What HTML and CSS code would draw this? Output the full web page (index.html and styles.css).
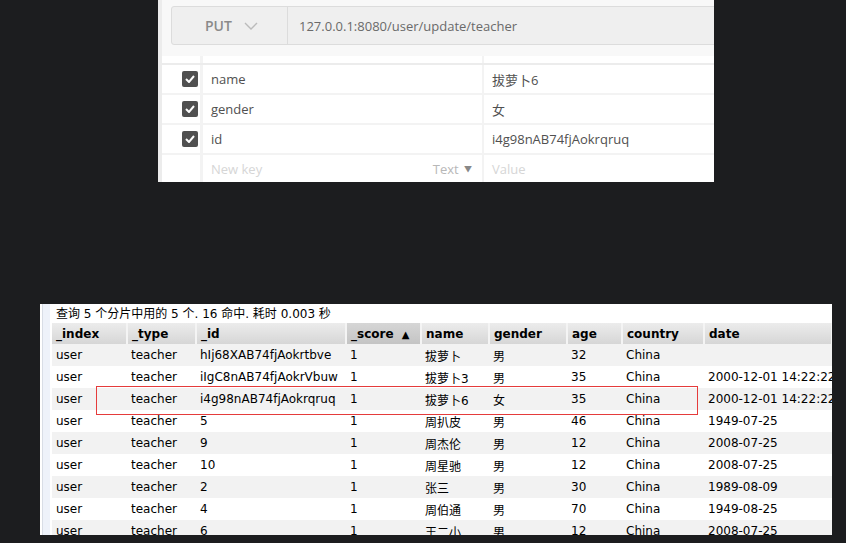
FILE: index.html
```html
<!DOCTYPE html>
<html>
<head>
<meta charset="utf-8">
<link rel="stylesheet" href="styles.css">
</head>
<body>
<div class="canvas">
  <section class="postman">
    <div class="bar-wrap">
      <div class="urlbar">
        <div class="method">PUT
          <svg class="chev" width="14" height="8" viewBox="0 0 14 8"><path d="M1 1 L7 7 L13 1" fill="none" stroke="#bbb" stroke-width="1.4"/></svg>
        </div>
        <div class="url">127.0.0.1:8080/user/update/teacher</div>
      </div>
    </div>
    <div class="kv-head">
      <div class="c-check"></div><div class="c-key"></div><div class="c-val"></div>
    </div>
    <div class="kv-row">
      <div class="c-check"><span class="cb"><svg width="10" height="8" viewBox="0 0 10 8"><path d="M1 4 L4 7 L9 1" fill="none" stroke="#fff" stroke-width="2"/></svg></span></div>
      <div class="c-key">name</div><div class="c-val">拔萝卜6</div>
    </div>
    <div class="kv-row">
      <div class="c-check"><span class="cb"><svg width="10" height="8" viewBox="0 0 10 8"><path d="M1 4 L4 7 L9 1" fill="none" stroke="#fff" stroke-width="2"/></svg></span></div>
      <div class="c-key">gender</div><div class="c-val">女</div>
    </div>
    <div class="kv-row">
      <div class="c-check"><span class="cb"><svg width="10" height="8" viewBox="0 0 10 8"><path d="M1 4 L4 7 L9 1" fill="none" stroke="#fff" stroke-width="2"/></svg></span></div>
      <div class="c-key">id</div><div class="c-val">i4g98nAB74fjAokrqruq</div>
    </div>
    <div class="kv-row ph">
      <div class="c-check"></div>
      <div class="c-key"><span>New key</span><span class="type">Text <span class="tri">▼</span></span></div>
      <div class="c-val">Value</div>
    </div>
  </section>

  <section class="es">
    <div class="side"></div>
    <div class="es-main">
      <div class="info">查询 5 个分片中用的 5 个. 16 命中. 耗时 0.003 秒</div>
      <table class="grid">
        <colgroup>
          <col style="width:75px"><col style="width:69px"><col style="width:150px"><col style="width:75px"><col style="width:68px"><col style="width:78px"><col style="width:55px"><col style="width:82px"><col style="width:128px">
        </colgroup>
        <thead>
          <tr><th>_index</th><th>_type</th><th>_id</th><th class="sorted">_score <span class="arrow">▲</span></th><th>name</th><th>gender</th><th>age</th><th>country</th><th>date</th></tr>
        </thead>
        <tbody>
          <tr><td>user</td><td>teacher</td><td>hIj68XAB74fjAokrtbve</td><td>1</td><td>拔萝卜</td><td>男</td><td>32</td><td>China</td><td></td></tr>
          <tr><td>user</td><td>teacher</td><td>iIgC8nAB74fjAokrVbuw</td><td>1</td><td>拔萝卜3</td><td>男</td><td>35</td><td>China</td><td>2000-12-01 14:22:22</td></tr>
          <tr><td>user</td><td>teacher</td><td>i4g98nAB74fjAokrqruq</td><td>1</td><td>拔萝卜6</td><td>女</td><td>35</td><td>China</td><td>2000-12-01 14:22:22</td></tr>
          <tr><td>user</td><td>teacher</td><td>5</td><td>1</td><td>周扒皮</td><td>男</td><td>46</td><td>China</td><td>1949-07-25</td></tr>
          <tr><td>user</td><td>teacher</td><td>9</td><td>1</td><td>周杰伦</td><td>男</td><td>12</td><td>China</td><td>2008-07-25</td></tr>
          <tr><td>user</td><td>teacher</td><td>10</td><td>1</td><td>周星驰</td><td>男</td><td>12</td><td>China</td><td>2008-07-25</td></tr>
          <tr><td>user</td><td>teacher</td><td>2</td><td>1</td><td>张三</td><td>男</td><td>30</td><td>China</td><td>1989-08-09</td></tr>
          <tr><td>user</td><td>teacher</td><td>4</td><td>1</td><td>周伯通</td><td>男</td><td>70</td><td>China</td><td>1949-08-25</td></tr>
          <tr><td>user</td><td>teacher</td><td>6</td><td>1</td><td>王二小</td><td>男</td><td>12</td><td>China</td><td>2008-07-25</td></tr>
        </tbody>
      </table>
      <div class="highlight"></div>
    </div>
  </section>
</div>
</body>
</html>
```

FILE: styles.css
```css
html, body {
  margin: 0;
  padding: 0;
  background: #1c1d1f;
}
.canvas {
  width: 846px;
  height: 543px;
  overflow: hidden;
  display: flex;
  flex-direction: column;
  align-items: flex-start;
}

/* ---------- top panel (request editor) ---------- */
.postman {
  margin-left: 158px;
  width: 552px;
  height: 182px;
  flex: none;
  background: #fff;
  border-left: 4px solid #ececec;
  overflow: hidden;
  font-family: "Open Sans", "Noto Sans CJK SC", sans-serif;
  font-size: 13px;
  color: #505050;
}
.bar-wrap {
  background: #f8f8f8;
  padding: 6px 0 11px 9px;
}
.urlbar {
  display: flex;
  width: 620px;
  height: 37px;
  background: #efefef;
  border: 1px solid #dcdcdc;
  border-radius: 3px;
}
.method {
  width: 82px;
  padding-left: 33px;
  border-right: 1px solid #dcdcdc;
  display: flex;
  align-items: center;
  gap: 12px;
  font-size: 14px;
  font-weight: 600;
  color: #8a8a8a;
}
.chev { margin-top: 1px; }
.url {
  display: flex;
  align-items: center;
  padding-left: 11px;
  color: #6a6a6a;
  font-size: 13px;
}
.kv-head {
  display: flex;
  height: 7px;
  border-bottom: 2px solid #ececec;
}
.kv-row {
  display: flex;
  height: 28px;
  border-bottom: 2px solid #f3f3f3;
}
.c-check {
  flex: none;
  border-right: 3px solid #f3f3f3;
  display: flex;
  align-items: center;
  justify-content: flex-end;
  padding-right: 2px;
  box-sizing: border-box;
  width: 41px;
}
.c-key {
  width: 281px;
  flex: none;
  box-sizing: border-box;
  border-right: 2px solid #f3f3f3;
  padding-left: 8px;
  padding-right: 10px;
  display: flex;
  align-items: center;
  justify-content: space-between;
}
.c-val {
  flex: 1;
  padding-left: 8px;
  display: flex;
  align-items: center;
}
.cb {
  width: 16px;
  height: 16px;
  border-radius: 2px;
  background: #505050;
  display: flex;
  align-items: center;
  justify-content: center;
}
.ph .c-key, .ph .c-val { color: #d6d6d6; }
.ph .type { color: #b8b8b8; }
.tri { font-size: 8px; vertical-align: 2px; margin-left: 2px; color: #888; }

/* ---------- bottom panel (elasticsearch head) ---------- */
.es {
  margin-top: 122px;
  margin-left: 40px;
  width: 792px;
  height: 231px;
  flex: none;
  background: #fff;
  display: flex;
  overflow: hidden;
  font-family: "DejaVu Sans", "Noto Sans CJK SC", sans-serif;
  font-size: 12px;
  color: #000;
}
.side {
  width: 7px;
  flex: none;
  margin: 0 2px 0 2px;
  border-left: 1px solid #d8dde6;
  background: #eef2fa;
}
.es-main {
  position: relative;
  flex: 1;
}
.info {
  height: 19px;
  line-height: 21px;
  padding-left: 4px;
  font-size: 12px;
  white-space: nowrap;
}
.grid {
  table-layout: fixed;
  border-collapse: collapse;
  width: 780px;
}
.grid th {
  height: 21px;
  padding: 0 0 0 4px;
  text-align: left;
  font-weight: bold;
  font-size: 12px;
  background: linear-gradient(#ececec, #d6d6d6);
  border-right: 2px solid #f4f4f4;
  white-space: nowrap;
  overflow: hidden;
}
.grid th.sorted {
  background: linear-gradient(#d6d6d6, #c4c4c4);
}
.arrow { font-size: 10px; margin-left: 4px; }
.grid td {
  height: 22px;
  padding: 0 0 0 4px;
  white-space: nowrap;
  overflow: hidden;
}
.grid tbody tr:nth-child(odd) td { background: #f2f2f2; }
.highlight {
  position: absolute;
  left: 44px;
  top: 82px;
  width: 600px;
  height: 27px;
  border: 1px solid #e53b3b;
}
```
